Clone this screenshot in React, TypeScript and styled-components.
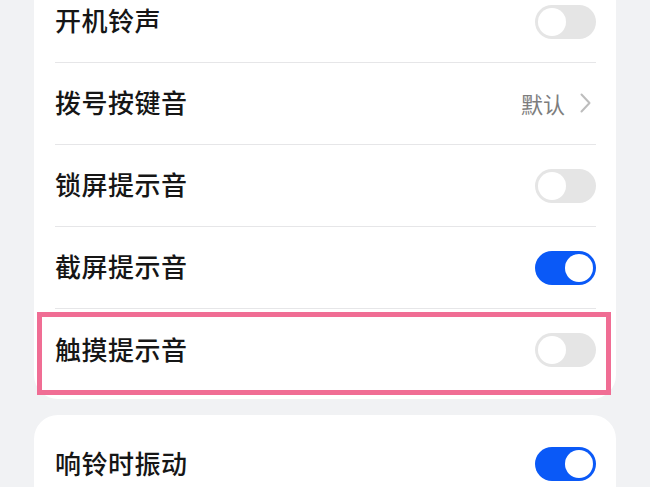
import React from 'react';
import styled, { createGlobalStyle } from 'styled-components';

const GlobalStyle = createGlobalStyle`
  html, body {
    margin: 0;
    padding: 0;
    background: #f1f2f4;
    font-family: "Noto Sans CJK SC", "Noto Sans", sans-serif;
  }
`;

const Page = styled.div`
  width: 650px;
  height: 487px;
  overflow: hidden;
  background: #f1f2f4;
`;

// the list is scrolled a little: the first card starts above the window
const Scroller = styled.div`
  display: flex;
  flex-direction: column;
  gap: 16px;
  margin-top: -27px;
  padding: 0 34px;
`;

const Card = styled.div`
  background: #fff;
  border-radius: 24px;
  padding: 8px 20px 8px 21px;
`;

const Row = styled.div<{ last?: boolean }>`
  position: relative;
  height: 82px;
  display: flex;
  align-items: center;
  justify-content: space-between;
  border-bottom: ${({ last }) => (last ? 'none' : '1px solid #e6e6e8')};
  box-sizing: border-box;
`;

const Label = styled.span`
  color: #161616;
  font-size: 26px;
  font-weight: 500;
  line-height: 1;
  letter-spacing: 0.5px;
  padding-bottom: 3px;
`;

const Value = styled.div`
  display: flex;
  align-items: center;
  gap: 15px;
  color: #7d7d7d;
  font-size: 22px;
  margin-right: 5px;
  padding-bottom: 2px;
`;

const Track = styled.div<{ on?: boolean }>`
  width: 61px;
  height: 34px;
  border-radius: 17px;
  background: ${({ on }) => (on ? '#0a59f7' : '#e5e5e5')};
  display: flex;
  align-items: center;
  justify-content: ${({ on }) => (on ? 'flex-end' : 'flex-start')};
  padding: 0 3px;
  box-sizing: border-box;
`;

const Knob = styled.div`
  width: 28px;
  height: 28px;
  border-radius: 50%;
  background: #fff;
`;

const Highlight = styled.div`
  position: absolute;
  top: 3px;
  bottom: -4px;
  left: -18px;
  right: -15px;
  border: 5px solid #f06d94;
  pointer-events: none;
`;

function Switch({ on }: { on?: boolean }) {
  return (
    <Track on={on}>
      <Knob />
    </Track>
  );
}

function Chevron() {
  return (
    <svg width="11" height="20" viewBox="0 0 11 20" fill="none">
      <path d="M1.5 1.5 L9.5 10 L1.5 18.5" stroke="#bdbdbd" strokeWidth="2" strokeLinecap="round" strokeLinejoin="round" />
    </svg>
  );
}

export default function App() {
  return (
    <Page>
      <GlobalStyle />
      <Scroller>
        <Card>
          <Row>
            <Label>开机铃声</Label>
            <Switch />
          </Row>
          <Row>
            <Label>拨号按键音</Label>
            <Value>
              默认
              <Chevron />
            </Value>
          </Row>
          <Row>
            <Label>锁屏提示音</Label>
            <Switch />
          </Row>
          <Row>
            <Label>截屏提示音</Label>
            <Switch on />
          </Row>
          <Row last>
            <Label>触摸提示音</Label>
            <Switch />
            <Highlight />
          </Row>
        </Card>
        <Card>
          <Row last>
            <Label>响铃时振动</Label>
            <Switch on />
          </Row>
        </Card>
      </Scroller>
    </Page>
  );
}
